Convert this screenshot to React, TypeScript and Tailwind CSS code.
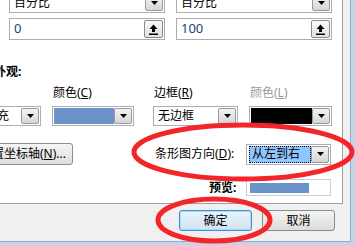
import React from 'react';

const font = "font-['Noto_Sans','Noto_Sans_CJK_SC',sans-serif]";

const Arrow = () => (
  <svg width="7" height="4" viewBox="0 0 7 4">
    <path d="M0 0h7L3.5 4z" fill="#000" />
  </svg>
);

const DropButton = () => (
  <div className="w-[18px] h-full border border-[#9a9a9a] rounded-[2px] bg-linear-to-b from-[#f4f4f4] to-[#d6d6d6] flex items-center justify-center">
    <Arrow />
  </div>
);

const SpinButton = () => (
  <div className="w-[19px] h-full border border-[#8a8a8a] rounded-[2px] bg-linear-to-b from-[#fafafa] to-[#e2e2e2] flex items-center justify-center">
    <svg width="11" height="11" viewBox="0 0 11 11">
      <path d="M5.5 0.5L9.5 5H7v3H4V5H1.5z" fill="#000" />
      <rect x="1" y="9.5" width="9" height="1.5" fill="#000" />
    </svg>
  </div>
);

const Combo: React.FC<{ className: string; children?: React.ReactNode }> = ({ className, children }) => (
  <div className={`flex items-stretch border border-[#abadb3] bg-white p-px ${className}`}>
    <div className="flex-1 flex items-center overflow-hidden">{children}</div>
    <DropButton />
  </div>
);

export default function App() {
  return (
    <div className={`w-[355px] h-[245px] overflow-hidden bg-[#c2d4ec] relative text-[12px] text-black ${font}`}>
      <div className="w-[351px] h-[242px] bg-[#f0f0f0] border-r border-b border-[#9aaac0] flex flex-col">
        {/* white panel */}
        <div className="w-[343px] h-[204px] bg-white border-r border-b border-[#a0a0a0] flex flex-col overflow-hidden">
          {/* row 1 */}
          <div className="flex mt-[-8px] h-[21px] shrink-0">
            <Combo className="ml-[9px] w-[156px]">
              <span className="pl-[3px] leading-[16px]">百分比</span>
            </Combo>
            <Combo className="ml-[11px] w-[156px]">
              <span className="pl-[3px] leading-[16px]">百分比</span>
            </Combo>
          </div>
          {/* row 2 */}
          <div className="flex mt-[5px] h-[22px] shrink-0">
            <div className="ml-[9px] w-[156px] flex border border-[#abadb3] p-px">
              <span className="flex-1 pl-[3px] flex items-center text-[13px] text-[#1e3f7a]">0</span>
              <SpinButton />
            </div>
            <div className="ml-[11px] w-[156px] flex border border-[#abadb3] p-px">
              <span className="flex-1 pl-[3px] flex items-center text-[13px] text-[#1e3f7a]">100</span>
              <SpinButton />
            </div>
          </div>
          {/* 外观 */}
          <div className="mt-[24px] h-[16px] ml-[-6px] font-bold leading-[16px] shrink-0">外观:</div>
          {/* labels */}
          <div className="flex mt-[5px] h-[16px] leading-[16px] shrink-0">
            <div className="w-[53px]" />
            <div className="w-[101px]">颜色(<span className="underline">C</span>)</div>
            <div className="w-[96px]">边框(<span className="underline">R</span>)</div>
            <div className="text-[#9a9a9a]">颜色(<span className="underline">L</span>)</div>
          </div>
          {/* combos row */}
          <div className="flex mt-[5px] h-[20px] shrink-0">
            <Combo className="ml-[-32px] w-[73px]">
              <span className="pl-[3px] leading-[16px] whitespace-nowrap">无填充</span>
            </Combo>
            <Combo className="ml-[11px] w-[82px]">
              <div className="w-full h-full bg-[#6a93ca]" />
            </Combo>
            <Combo className="ml-[19px] w-[85px]">
              <span className="pl-[3px] leading-[16px]">无边框</span>
            </Combo>
            <Combo className="ml-[11px] w-[83px]">
              <div className="w-full h-full bg-black" />
            </Combo>
          </div>
          {/* axis button + direction */}
          <div className="flex items-center mt-[17px] h-[22px] shrink-0">
            <div className="ml-[-20px] w-[93px] h-full border border-[#8c8c8c] rounded-[3px] bg-linear-to-b from-[#f6f6f6] to-[#dddddd] flex items-center pl-[11px] leading-[16px] whitespace-nowrap">
              <span>置坐标轴(<span className="underline">N</span>)...</span>
            </div>
            <div className="ml-[82px] w-[80px] leading-[16px] whitespace-nowrap">
              条形图方向(<span className="underline">D</span>):
            </div>
            <Combo className="ml-[11px] w-[85px] h-[21px]">
              <span className="ml-[1px] w-[64px] h-full bg-[#90c6ff] border border-dotted border-black flex items-center pl-[2px] leading-[16px]">从左到右</span>
            </Combo>
          </div>
          {/* preview */}
          <div className="flex items-center mt-[14px] h-[17px] shrink-0">
            <div className="ml-[209px] w-[28px] font-bold leading-[16px]">预览:</div>
            <div className="ml-[9px] w-[85px] h-full border border-[#cfcfcf] bg-white flex items-center pl-[3px]">
              <div className="w-[59px] h-[10px] bg-[#6a93ca]" />
            </div>
          </div>
        </div>
        {/* footer */}
        <div className="flex mt-[6px] h-[21px]">
          <button className="ml-[179px] w-[73px] h-full border border-[#3c8fd8] rounded-[3px] bg-linear-to-b from-[#eaf4fb] to-[#d2e3f0] shadow-[inset_0_0_0_1px_#a9dcf6] leading-[16px]">
            确定
          </button>
          <button className="ml-[10px] w-[73px] h-full border border-[#8c8c8c] rounded-[3px] bg-linear-to-b from-[#f4f4f4] to-[#dcdcdc] leading-[16px]">
            取消
          </button>
        </div>
      </div>
      {/* red annotation ellipses */}
      <svg className="absolute inset-0 pointer-events-none" width="355" height="245" viewBox="0 0 355 245">
        <ellipse cx="243" cy="152" rx="109" ry="27" fill="none" stroke="#f2262a" strokeWidth="5" />
        <ellipse cx="214" cy="220" rx="56" ry="21" fill="none" stroke="#f2262a" strokeWidth="5" />
      </svg>
    </div>
  );
}
